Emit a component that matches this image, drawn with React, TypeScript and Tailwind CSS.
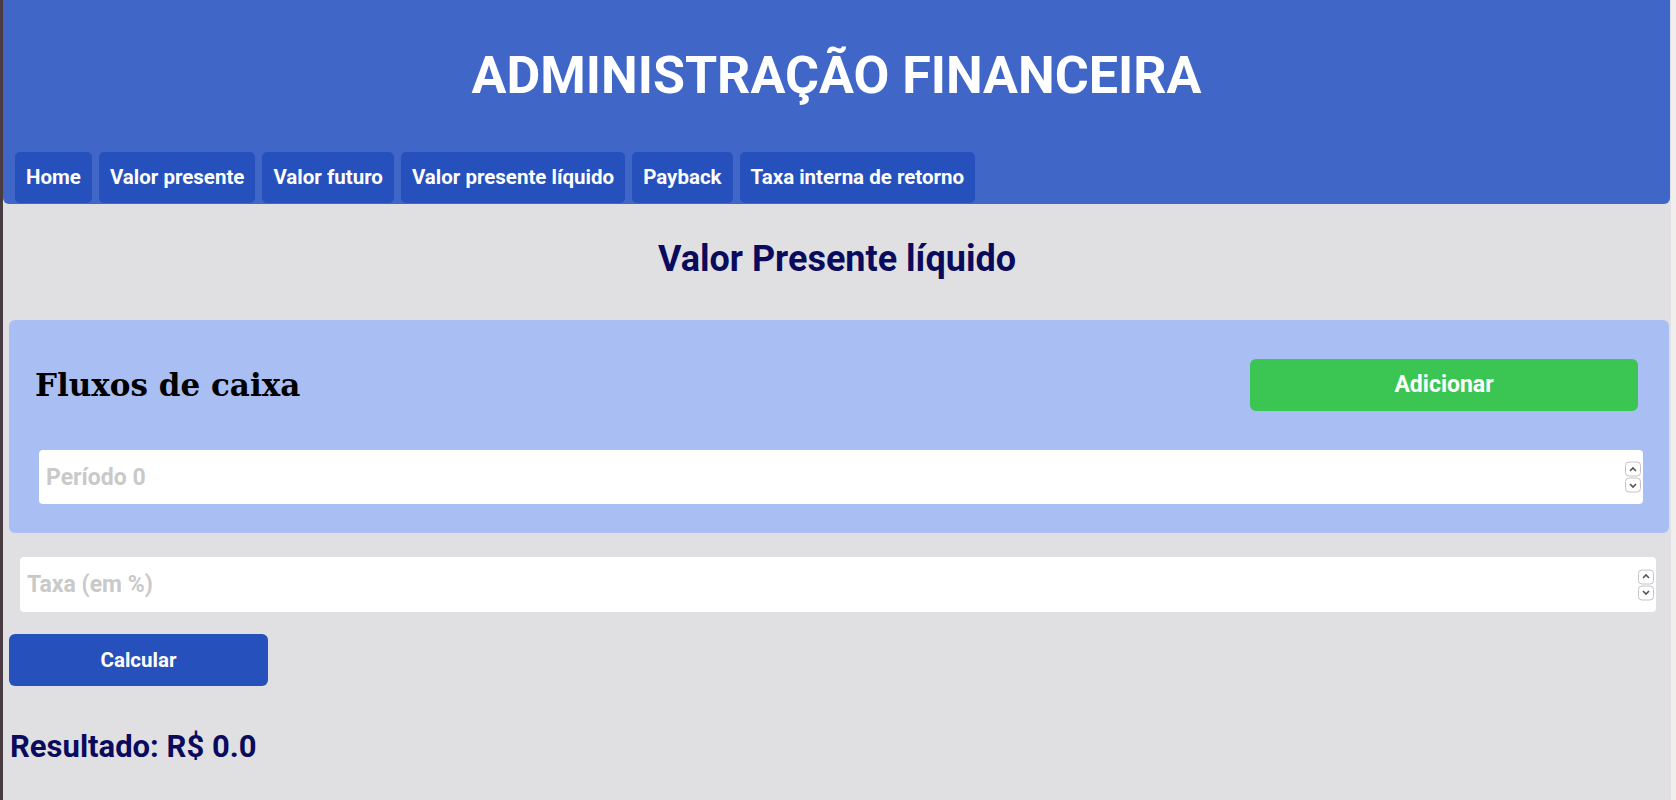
import { useState } from "react";

const tabs = [
  "Home",
  "Valor presente",
  "Valor futuro",
  "Valor presente líquido",
  "Payback",
  "Taxa interna de retorno",
];

const Spinner = () => (
  <div className="pointer-events-none absolute right-[2px] top-1/2 flex -translate-y-1/2 flex-col gap-[1px]">
    <div className="flex h-[15px] w-[16px] items-center justify-center rounded-[4px] border border-[#c4c4c4] bg-white">
      <svg width="10" height="8" viewBox="0 0 10 8">
        <path d="M2 5.5 L5 2.5 L8 5.5" fill="none" stroke="#555" strokeWidth="1.6" />
      </svg>
    </div>
    <div className="flex h-[15px] w-[16px] items-center justify-center rounded-[4px] border border-[#c4c4c4] bg-white">
      <svg width="10" height="8" viewBox="0 0 10 8">
        <path d="M2 2.5 L5 5.5 L8 2.5" fill="none" stroke="#555" strokeWidth="1.6" />
      </svg>
    </div>
  </div>
);

const NumberField = ({
  placeholder,
  className,
}: {
  placeholder: string;
  className: string;
}) => (
  <div className={`relative ${className}`}>
    <input
      type="text"
      placeholder={placeholder}
      className="h-full w-full rounded-[4px] bg-white px-[7px] text-[23px] font-bold text-[#222] outline-none placeholder:text-[#c9c9c9]"
    />
    <Spinner />
  </div>
);

const App = () => {
  const [fluxos] = useState([0]);

  return (
    <div
      className="flex min-h-[800px] w-full bg-[#e0e0e2]"
      style={{ fontFamily: "Roboto, 'Liberation Sans', sans-serif" }}
    >
      <div className="w-[3px] shrink-0 bg-[#4a3a42]" />
      <div className="flex-1">
        <header className="mr-[1px] rounded-b-[6px] bg-[#4066c8] pb-[1px]">
          <div className="flex h-[152px] items-center justify-center">
            <h1 className="text-[52px] font-bold leading-none text-white">
              ADMINISTRAÇÃO FINANCEIRA
            </h1>
          </div>
          <nav className="flex h-[51px] gap-[7px] pl-[12px]">
            {tabs.map((tab) => (
              <button
                key={tab}
                className="rounded-[5px] bg-[#2650bc] px-[11px] text-[20.5px] font-bold text-white"
              >
                {tab}
              </button>
            ))}
          </nav>
        </header>

        <div className="flex h-[110px] items-center justify-center">
          <h2 className="text-[36px] font-bold leading-none text-[#0b0b5e]">
            Valor Presente líquido
          </h2>
        </div>

        <section className="ml-[6px] mr-[2px] mt-[6px] rounded-[6px] bg-[#a9bef2] pb-[29px]">
          <div className="flex items-center justify-between pl-[26px] pr-[31px] pt-[39px]">
            <h3
              className="text-[31px] font-bold leading-none text-black"
              style={{ fontFamily: "'DejaVu Serif', serif" }}
            >
              Fluxos de caixa
            </h3>
            <button className="h-[52px] w-[388px] rounded-[6px] bg-[#3bc553] text-[23px] font-bold text-white">
              Adicionar
            </button>
          </div>
          {fluxos.map((f) => (
            <NumberField
              key={f}
              placeholder={`Período ${f}`}
              className="ml-[30px] mr-[26px] mt-[39px] h-[54px]"
            />
          ))}
        </section>

        <NumberField
          placeholder="Taxa (em %)"
          className="ml-[17px] mr-[15px] mt-[24px] h-[55px]"
        />

        <button className="ml-[6px] mt-[22px] h-[52px] w-[259px] rounded-[6px] bg-[#2651bd] text-[20.5px] font-bold text-white">
          Calcular
        </button>

        <p className="ml-[7px] mt-[45px] text-[31px] font-bold leading-none text-[#0b0b5e]">
          Resultado: R$ 0.0
        </p>
      </div>
      <div className="w-[5px] shrink-0 bg-[#f0efee]" />
    </div>
  );
};

export default App;
